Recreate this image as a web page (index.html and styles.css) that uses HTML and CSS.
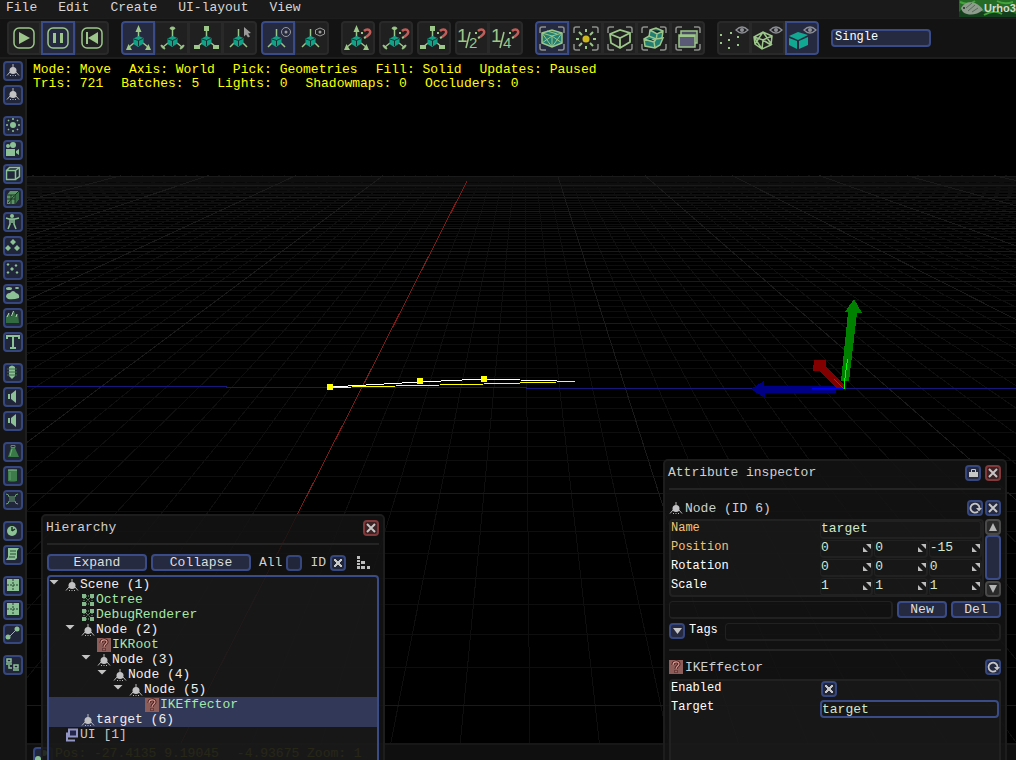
FILE: index.html
```html
<!DOCTYPE html>
<html lang="en">
<head>
<meta charset="utf-8">
<title>Urho3D Editor</title>
<link rel="stylesheet" href="styles.css">
</head>
<body>
<svg class="defs" aria-hidden="true">
  <defs>
    <symbol id="cube-core" viewBox="0 0 34 34">
      <path d="M12.500 17.500 17.500 15 22.500 17v5.500L17 26l-4.500-3z" fill="#0fa287"/>
      <path d="M13 18l4.500 1.500L22 17.500M17.500 19.500V25" stroke="#14312f" fill="none"/>
    </symbol>
    <symbol id="axes-move" viewBox="0 0 34 34">
      <path d="M17.500 8v8M13 22l-5 4M22 22l5 4" stroke="#9cc68a" stroke-width="1.500" fill="none"/>
      <path d="M17.500 4l3 7h-6zM5 29l2.500-6L11 29zM30 29l-2.500-6L24 29z" fill="#9cc68a"/>
      <use href="#cube-core"/>
    </symbol>
    <symbol id="axes-rotate" viewBox="0 0 34 34">
      <path d="M17.500 8v8M13 22l-5 4M22 22l5 4" stroke="#9cc68a" stroke-width="1.500" fill="none"/>
      <path d="M15 7.500c0-2 5-2 5 0l-1.500 1h-2zM6 24c0 2 2 4 4 4l-1-2-1-1zM29 24c0 2-2 4-4 4l1-2 1-1z" fill="#9cc68a" stroke="#9cc68a"/>
      <use href="#cube-core"/>
    </symbol>
    <symbol id="axes-scale" viewBox="0 0 34 34">
      <path d="M17.500 8v8M13 22l-5 4M22 22l5 4" stroke="#9cc68a" stroke-width="1.500" fill="none"/>
      <path d="M15 5h5v5h-5zM5 24h6v4H5zM24 24h6v4h-6z" fill="#9cc68a"/>
      <use href="#cube-core"/>
    </symbol>
    <symbol id="axes-plain" viewBox="0 0 34 34">
      <path d="M15.500 8v8M11 22l-4 4M20 22l4 4" stroke="#9cc68a" stroke-width="1.500" fill="none"/>
      <use href="#cube-core" x="-2"/>
    </symbol>
    <symbol id="snap" viewBox="0 0 34 34">
      <path d="M23 10c2-2 5-2 6 0s-1 4-4 6" fill="none" stroke="#c05d58" stroke-width="2.500"/>
      <path d="M20 12h2M23 17l2-1" stroke="#9cc68a" stroke-width="2"/>
    </symbol>
    <symbol id="corners" viewBox="0 0 34 34">
      <path d="M5 12V8q0-2 2-2h4M23 6h4q2 0 2 2v4M29 23v4q0 2-2 2h-4M11 29H7q-2 0-2-2v-4" fill="none" stroke="#8c8f8c" stroke-width="1.500"/>
    </symbol>
    <symbol id="eye" viewBox="0 0 34 34">
      <path d="M19 9q6-6 12 0-6 6-12 0z" fill="none" stroke="#8d8f95" stroke-width="1.300"/><circle cx="25" cy="9" r="2" fill="#8d8f95"/>
    </symbol>
    <symbol id="node" viewBox="0 0 14 14">
      <path d="M7 1v4M4 9l-3 3.500M10 9l3 3.500M4 12.500h1M6.500 12.500h1M9 12.500h1" stroke="#b9b9b9" fill="none"/>
      <circle cx="7" cy="7.500" r="3.500" fill="#c2c2c4"/>
    </symbol>
    <symbol id="blocks" viewBox="0 0 14 14">
      <path d="M1 1h4v4H1zM9 1h4v4H9zM1 9h4v4H1zM9 9h4v4H9z" fill="#83b98b"/><path d="M5 3h4M3 5v4M11 5v4M5 11h4M5 5l4 4M9 5l-4 4" stroke="#83b98b" stroke-dasharray="1 1"/>
    </symbol>
    <symbol id="unknown" viewBox="0 0 14 14">
      <path d="M0 0h14v14H0z" fill="#8c5d59"/><path d="M4 5c0-4 6-4 6-1 0 2-3 2-3 5M7 10v3" stroke="#471b1b" stroke-width="3" fill="none"/><path d="M4 5c0-4 6-4 6-1 0 2-3 2-3 5M7 10.500v2" stroke="#d99c93" stroke-width="1.200" fill="none"/>
    </symbol>
    <symbol id="uiroot" viewBox="0 0 14 14">
      <path d="M4 1.500h8v7H4z" fill="#24254b" stroke="#9294c4" stroke-width="2"/><path d="M2 4.500v8h8" fill="none" stroke="#9294c4" stroke-width="2"/>
    </symbol>
    <symbol id="cross" viewBox="0 0 16 16"><path d="M4 4l8 8M12 4l-8 8" stroke="#c7c7c7" stroke-width="2"/></symbol>
    <symbol id="reload" viewBox="0 0 16 16"><path d="M11 11.500a4.500 4.500 0 1 1 1.500-3.500" fill="none" stroke="#c7c7c7" stroke-width="1.800"/><path d="M9 8h6l-3 3.500z" fill="#c7c7c7"/></symbol>
    <symbol id="panel" viewBox="0 0 20 20"><path d="M4 3h12v12H4z" fill="#8cc195"/><path d="M10 3v12M4 9h12" stroke="#22432f" stroke-dasharray="2 1"/></symbol>
    <symbol id="speaker" viewBox="0 0 20 20"><path d="M5 7h2v5H5zM8 7l5-4v13l-5-4z" fill="#8cc195"/></symbol>
    <symbol id="resize" viewBox="0 0 10 10"><path d="M4 1h5v5zM1 4v5h5z" fill="#bdbdbd"/></symbol>
  </defs>
</svg>

<header class="menubar">
  <nav class="menus">
    <button class="menu">File</button><button class="menu">Edit</button><button class="menu">Create</button><button class="menu">UI-layout</button><button class="menu">View</button>
  </nav>
  <svg class="logo" viewBox="0 0 57 17" role="img" aria-label="Urho3D">
    <path d="M0 0h57v17H0z" fill="#246b25"/>
    <path d="M0 12q8-9 16-4t12 4 14-4l15 6v3H0z" fill="#143f1c"/>
    <path d="M1 2q9 4 15-1M25 15q10-6 18-1M38 1q7 4 16 1" stroke="#44a33a" stroke-width="2" fill="none"/>
    <path d="M2 8q5-8 14-5 6 3 8 7-8 6-16 4-5-1-6-6z" fill="#8e9c8d"/>
    <path d="M7 8l6-5M9 11l7-6M13 12l6-4" stroke="#566b5c"/><circle cx="5" cy="8" r="1" fill="#172a1c"/>
    <text class="logo-text" x="25" y="12">Urho3</text>
  </svg>
</header>

<div class="toolbar" role="toolbar">
  <div class="tools">
    <button class="tool" aria-label="Play"><svg viewBox="0 0 34 34"><rect x="7" y="7" width="20" height="20" rx="5" fill="none" stroke="#9cc68a" stroke-width="1.500"/><path d="M12 11v12l11-6z" fill="#9cc68a"/></svg></button>
    <button class="tool on" aria-label="Pause"><svg viewBox="0 0 34 34"><rect x="7" y="7" width="20" height="20" rx="5" fill="none" stroke="#9cc68a" stroke-width="1.500"/><path d="M12 12h3v10h-3zM19 12h3v10h-3z" fill="#9cc68a"/></svg></button>
    <button class="tool" aria-label="Rewind"><svg viewBox="0 0 34 34"><rect x="7" y="7" width="20" height="20" rx="5" fill="none" stroke="#9cc68a" stroke-width="1.500"/><path d="M11 11h2v12h-2zM23 11v12l-10-6z" fill="#9cc68a"/></svg></button>
  </div>
  <div class="tools">
    <button class="tool on" aria-label="Move"><svg><use href="#axes-move"/></svg></button>
    <button class="tool" aria-label="Rotate"><svg><use href="#axes-rotate"/></svg></button>
    <button class="tool" aria-label="Scale"><svg><use href="#axes-scale"/></svg></button>
    <button class="tool" aria-label="Select"><svg viewBox="0 0 34 34"><use href="#axes-plain"/><path d="M21 6l7 6-3 .5 2 3-2 1-2-3-2 2z" fill="#9b9b9b"/></svg></button>
  </div>
  <div class="tools tight">
    <button class="tool on" aria-label="World axes"><svg viewBox="0 0 34 34"><use href="#axes-plain"/><circle cx="25" cy="11" r="4.500" fill="none" stroke="#9b9b9b"/><circle cx="25" cy="11" r="1.500" fill="#9b9b9b"/></svg></button>
    <button class="tool" aria-label="Local axes"><svg viewBox="0 0 34 34"><use href="#axes-plain"/><path d="M25 7l4.500 2v4L25 15l-4.500-2V9z" fill="none" stroke="#9b9b9b"/><circle cx="25" cy="11" r="1.500" fill="#9b9b9b"/></svg></button>
  </div>
  <div class="tools"><button class="tool" aria-label="Snap move"><svg viewBox="0 0 34 34"><use href="#axes-move" x="-2"/><use href="#snap"/></svg></button></div>
  <div class="tools tight"><button class="tool" aria-label="Snap rotate"><svg viewBox="0 0 34 34"><use href="#axes-rotate" x="-2"/><use href="#snap"/></svg></button></div>
  <div class="tools tight"><button class="tool" aria-label="Snap scale"><svg viewBox="0 0 34 34"><use href="#axes-scale" x="-2"/><use href="#snap"/></svg></button></div>
  <div class="tools tight">
    <button class="tool" aria-label="Half snap"><svg viewBox="0 0 34 34"><text class="frac big" x="2" y="21">1</text><path d="M11 27l4-16" stroke="#9cc68a" stroke-width="1.500"/><text class="frac" x="14" y="27">2</text><use href="#snap"/></svg></button>
    <button class="tool" aria-label="Quarter snap"><svg viewBox="0 0 34 34"><text class="frac big" x="2" y="21">1</text><path d="M11 27l4-16" stroke="#9cc68a" stroke-width="1.500"/><text class="frac" x="14" y="27">4</text><use href="#snap"/></svg></button>
  </div>
  <div class="tools">
    <button class="tool on" aria-label="Pick geometries"><svg viewBox="0 0 34 34"><use href="#corners"/><path d="M7 12l10-3 10 3v10l-10 4-10-4z" fill="#227f72" stroke="#9cc68a" stroke-width="1.500"/><path d="M7 12l10 3 10-3M17 15v11M7 12l10 14M27 12L17 26M12 10l10 3M7 22l10-7 10 7" stroke="#9cc68a" fill="none"/></svg></button>
    <button class="tool" aria-label="Pick lights"><svg viewBox="0 0 34 34"><use href="#corners"/><circle cx="17" cy="18" r="3.500" fill="#cdb91e"/><path d="M17 8v3M17 25v3M7 18h3M24 18h3M10 11l3 3M21 22l3 3M24 11l-3 3M13 22l-3 3" stroke="#9cc68a" stroke-width="2"/></svg></button>
    <button class="tool" aria-label="Pick zones"><svg viewBox="0 0 34 34"><use href="#corners"/><path d="M7 13l10-4 10 3v9l-10 6-9-5zM7 13l10 4 10-5M17 17v10" fill="none" stroke="#9cc68a" stroke-width="1.800"/></svg></button>
    <button class="tool" aria-label="Pick bodies"><svg viewBox="0 0 34 34"><use href="#corners"/><path d="M13 9l6-2 7 3-1 7-6 3-7-4zM13 9l7 4 6-3M20 13l-1 7" fill="#227f72" stroke="#9cc68a" stroke-width="1.500"/><path d="M7 18l5-3 7 3 7-1-3 7-5 3-10-2zM7 18l10 3 2-3M17 21l1 6" fill="#227f72" stroke="#9cc68a" stroke-width="1.500"/></svg></button>
    <button class="tool" aria-label="Pick UI"><svg viewBox="0 0 34 34"><use href="#corners"/><path d="M10 10h16v12H10z" fill="#4b4b62" stroke="#9cc68a" stroke-width="1.500"/><path d="M8 14h16v12H8z" fill="#5b5a76" stroke="#9cc68a" stroke-width="1.500"/><path d="M8 15h16" stroke="#9cc68a" stroke-width="2"/></svg></button>
  </div>
  <div class="tools">
    <button class="tool" aria-label="Point fill"><svg viewBox="0 0 34 34"><use href="#eye"/><path d="M3 13h2v2H3zM13 11h2v2h-2zM3 21h2v2H3zM11 18h2v2h-2zM20 15h2v2h-2zM20 23h2v2h-2zM11 26h2v2h-2z" fill="#9cc68a"/></svg></button>
    <button class="tool" aria-label="Wire fill"><svg viewBox="0 0 34 34"><use href="#eye"/><path d="M3 16l9-5 9 4-1 9-9 4-7-5zM3 16l9 3 9-4M12 19l-1 9M12 11l9 13M3 16l8 12M12 19l8 5M12 11L4 23" fill="none" stroke="#9cc68a" stroke-width="1.500"/></svg></button>
    <button class="tool on" aria-label="Solid fill"><svg viewBox="0 0 34 34"><use href="#eye"/><path d="M4 15l9-4 10 3-10 5zM4 17l8 3v8l-8-4zM14 20l9-4v8l-9 4z" fill="#10a890"/></svg></button>
  </div>
  <select class="view-select" aria-label="Viewport layout"><option>Single</option></select>
</div>

<div class="work">
  <aside class="sidebar">
    <div class="side-group">
      <button class="side" aria-label="Replicated node"><svg viewBox="-3 -2 20 20"><use href="#node" width="14" height="14"/></svg></button>
      <button class="side" aria-label="Local node"><svg viewBox="-3 -2 20 20"><use href="#node" width="14" height="14"/></svg></button>
    </div>
    <div class="side-group">
      <button class="side" aria-label="Light"><svg viewBox="0 0 20 20"><circle cx="10" cy="9" r="3" fill="#8cc195"/><path d="M10 2v2M10 14v2M3 9h2M15 9h2M5 4l1 1M15 4l-1 1M5 14l1-1M15 14l-1-1" stroke="#8cc195" stroke-width="1.500"/></svg></button>
      <button class="side" aria-label="Camera"><svg viewBox="0 0 20 20"><path d="M3 9h9v7H3zM13 11l3-2v6l-3-2z" fill="#8cc195"/><circle cx="5" cy="6" r="2" fill="#8cc195"/><circle cx="10" cy="5" r="3" fill="#8cc195"/></svg></button>
      <button class="side" aria-label="Zone"><svg viewBox="0 0 20 20"><path d="M3.500 6.500h9v9h-9zM3.500 6.500l3-3h10v9l-4 3M12.500 6.500l4-3" fill="none" stroke="#8cc195" stroke-width="1.500"/></svg></button>
      <button class="side" aria-label="Static model"><svg viewBox="0 0 20 20"><path d="M4 7l3-4h9v8l-4 5H4z" fill="#5a9366"/><path d="M12 7l4-4v8l-4 5z" fill="#397047"/><path d="M4 7h8v9M12 7l4-4M8 7v9M4 11h8M5 15l6-7" stroke="#193321" fill="none"/></svg></button>
      <button class="side" aria-label="Animated model"><svg viewBox="0 0 20 20"><circle cx="9" cy="4" r="2" fill="#8cc195"/><path d="M3 6l3 1h6l4-1M9 7v4M7 7v5l-2 5M11 7v5l2 5" stroke="#8cc195" stroke-width="1.500" fill="none"/></svg></button>
      <button class="side" aria-label="Billboards"><svg viewBox="0 0 20 20"><path d="M10 3l3 3-3 3-3-3zM5 9l3 3-3 3-3-3zM14 9l3 3-3 3-3-3z" fill="#8cc195"/></svg></button>
      <button class="side" aria-label="Particles"><svg viewBox="0 0 20 20"><path d="M5 3l1.500 1.500L5 6 3.500 4.500zM13 4l1.500 1.500L13 7l-1.500-1.500zM9 7l2 2-2 2-2-2zM5 11l1.500 1.500L5 14l-1.500-1.500zM14 11l1.500 1.500L14 14l-1.500-1.500z" fill="#8cc195"/></svg></button>
      <button class="side" aria-label="Skybox"><svg viewBox="0 0 20 20"><ellipse cx="6" cy="4.500" rx="3" ry="1.500" fill="#8cc195"/><ellipse cx="14" cy="4" rx="2" ry="1" fill="#8cc195"/><path d="M3 13q0-4 4-4 3-4 6 0 4 1 3 5-6 2-11 1z" fill="#8cc195"/></svg></button>
      <button class="side" aria-label="Terrain"><svg viewBox="0 0 20 20"><path d="M3 15V9l3-4 2 4 3-6 2 5 2-2 1 9z" fill="#326b40"/><path d="M6 5L4 9M10.500 3l-2 5M14 6l-1 3" stroke="#b7ddb9" fill="none"/></svg></button>
      <button class="side" aria-label="Text 3D"><svg viewBox="0 0 20 20"><path d="M4 7V4h12v3M10 4v12M7 16h6" fill="none" stroke="#8cc195" stroke-width="2"/></svg></button>
    </div>
    <div class="side-group">
      <button class="side" aria-label="Sound listener"><svg viewBox="0 0 20 20"><path d="M6 4q3-3 6 0v9l-3 3-3-3z" fill="#8cc195"/><path d="M4 6h10M4 9h10M4 12h10" stroke="#3f6a4a"/></svg></button>
      <button class="side" aria-label="Sound source"><svg><use href="#speaker"/></svg></button>
      <button class="side" aria-label="Sound source 3D"><svg><use href="#speaker"/></svg></button>
    </div>
    <div class="side-group">
      <button class="side" aria-label="Rigid body"><svg viewBox="0 0 20 20"><path d="M8 6L5 15h11L12 6z" fill="#397947"/><path d="M8 3.500h4v2H8z" fill="none" stroke="#5f8f68"/><path d="M9 7l-2 7" stroke="#6fae7b"/></svg></button>
      <button class="side" aria-label="Collision shape"><svg viewBox="0 0 20 20"><path d="M5 4q4-1 9 0v11q-5 1-9 0z" fill="#3f7c4c"/><path d="M5 4h9" stroke="#8cc195"/><path d="M7 6v8" stroke="#65a171"/></svg></button>
      <button class="side" aria-label="Constraint"><svg viewBox="0 0 20 20"><path d="M3 4q3 0 3 3h6q0-3 3-3M3 14q3 0 3-3h6q0 3 3 3M6 9h6" fill="none" stroke="#69a473"/></svg></button>
    </div>
    <div class="side-group">
      <button class="side" aria-label="Animation"><svg viewBox="0 0 20 20"><circle cx="9" cy="10" r="5" fill="#8cc195"/><path d="M9 10V6M9 10l3-2M7 3h4" stroke="#193321" stroke-width="1.500"/></svg></button>
      <button class="side" aria-label="Script"><svg viewBox="0 0 20 20"><path d="M5 3h11l-2 3v7l-2 2H3l2-3z" fill="#8cc195"/><path d="M7 6h6M7 9h6M6 12h6" stroke="#274b32"/></svg></button>
    </div>
    <div class="side-group">
      <button class="side" aria-label="Navigable"><svg><use href="#panel"/></svg></button>
      <button class="side" aria-label="Navigation mesh"><svg><use href="#panel"/></svg></button>
      <button class="side" aria-label="Connection"><svg viewBox="0 0 20 20"><path d="M5 14l9-9" stroke="#8cc195"/><circle cx="5" cy="13" r="2.500" fill="#8cc195"/><circle cx="14" cy="5" r="2.500" fill="#8cc195"/></svg></button>
    </div>
    <div class="side-group">
      <button class="side" aria-label="Network"><svg viewBox="0 0 20 20"><path d="M4 4h4v3H4zM11 10h4v3h-4zM3 9h6M10 15h6M6 10v3h3" fill="none" stroke="#8cc195" stroke-width="1.500"/></svg></button>
    </div>
  </aside>

  <main class="viewport">
    <svg class="scene" viewBox="27 59 989 701" preserveAspectRatio="xMinYMin slice" aria-hidden="true">
      <rect x="27" y="177" width="989" height="14" fill="#080808"/>
      <path id="minor" class="grid-minor"/>
      <path id="major" class="grid-major"/>
      <path d="M467 181L180 745" stroke="#7d1a1a"/>
      <path d="M27 386.500H226V387.500H526V388.500H840" stroke="#17177c" fill="none"/>
      <path d="M840 388.500H1016" stroke="#17177c"/>
      <path d="M330 387L420 382 484 379 575 381.500" fill="none" stroke="#fff"/>
      <path d="M330 387.500L484 384 575 381.500" fill="none" stroke="#ff0"/>
      <g fill="#ff0"><circle cx="330" cy="387" r="3.500"/><circle cx="420" cy="381" r="3.500"/><circle cx="484" cy="379" r="3.500"/></g>
      <path d="M751 389l13-8v5h72v7h-71v5z" fill="#000084"/>
      <path d="M814 360h12v6l18 19v4h-7l-18-18h-6z" fill="#820000"/>
      <path d="M841 381l7-69h-3l9-13 8 14h-5l-8 68z" fill="#008200"/>
      <path d="M812 388.500l32 .5" stroke="#0000f0"/><path d="M834 379l10 10" stroke="#f00"/><path d="M844.500 389v-7l3-23" stroke="#0f0" fill="none"/>
    </svg>

    <div class="hud">
      <div class="hud-line"><span>Mode: Move</span><span>Axis: World</span><span>Pick: Geometries</span><span>Fill: Solid</span><span>Updates: Paused</span></div>
      <div class="hud-line"><span>Tris: 721</span><span>Batches: 5</span><span>Lights: 0</span><span>Shadowmaps: 0</span><span>Occluders: 0</span></div>
    </div>

    <footer class="status">
      <span class="side"><svg viewBox="0 0 20 20"><circle cx="5" cy="12" r="3" fill="#8cc195"/><circle cx="11" cy="6" r="3" fill="#8cc195"/></svg></span>
      <span class="pos">Pos: -27.4135 9.19045</span><span>-4.93675 Zoom: 1</span>
    </footer>

    <section class="window hierarchy" aria-label="Hierarchy">
      <div class="titlebar"><h2 class="title">Hierarchy</h2><button class="mini close" aria-label="Close hierarchy"><svg><use href="#cross"/></svg></button></div>
      <div class="rule"></div>
      <div class="controls">
        <button class="btn wide">Expand</button><button class="btn wide">Collapse</button>
        <label class="check-label" for="all">All</label><input class="check" type="checkbox" id="all">
        <label class="check-label" for="showid">ID</label><input class="check" type="checkbox" id="showid" checked>
        <svg class="tree-icon" viewBox="0 0 14 14"><path d="M1 0h3v3H1zM1 4h3v2H1zM1 7h3v2H1zM5 5h4v3H5zM1 10h3v3H1zM5 10h4v3H5zM11 10h3v3h-3z" fill="#bdbdbd"/></svg>
      </div>
      <ul class="tree">
        <li class="row d0"><i class="arrow"></i><svg class="ico"><use href="#node"/></svg>Scene (1)</li>
        <li class="row d1 comp"><i class="arrow none"></i><svg class="ico"><use href="#blocks"/></svg>Octree</li>
        <li class="row d1 comp"><i class="arrow none"></i><svg class="ico"><use href="#blocks"/></svg>DebugRenderer</li>
        <li class="row d1"><i class="arrow"></i><svg class="ico"><use href="#node"/></svg>Node (2)</li>
        <li class="row d2 comp"><i class="arrow none"></i><svg class="ico"><use href="#unknown"/></svg>IKRoot</li>
        <li class="row d2"><i class="arrow"></i><svg class="ico"><use href="#node"/></svg>Node (3)</li>
        <li class="row d3"><i class="arrow"></i><svg class="ico"><use href="#node"/></svg>Node (4)</li>
        <li class="row d4"><i class="arrow"></i><svg class="ico"><use href="#node"/></svg>Node (5)</li>
        <li class="row d5 comp sel"><i class="arrow none"></i><svg class="ico"><use href="#unknown"/></svg>IKEffector</li>
        <li class="row d1 sel"><i class="arrow none"></i><svg class="ico"><use href="#node"/></svg>target (6)</li>
        <li class="row d0 dim"><i class="arrow none"></i><svg class="ico"><use href="#uiroot"/></svg>UI [1]</li>
      </ul>
    </section>

    <section class="window inspector" aria-label="Attribute inspector">
      <div class="titlebar"><h2 class="title">Attribute inspector</h2>
        <button class="mini" aria-label="Lock"><svg viewBox="0 0 16 16"><path d="M4 7h9v5H4z" fill="#c7c7c7"/><path d="M6.500 7V4.500h4V7" stroke="#c7c7c7" fill="none"/></svg></button>
        <button class="mini close" aria-label="Close inspector"><svg><use href="#cross"/></svg></button></div>
      <div class="rule"></div>
      <div class="section-head node-head"><svg class="ico"><use href="#node"/></svg><h3 class="title">Node (ID 6)</h3>
        <button class="mini" aria-label="Reset node"><svg><use href="#reload"/></svg></button><button class="mini" aria-label="Remove node"><svg><use href="#cross"/></svg></button></div>
      <div class="attr-area">
        <div class="attrs">
          <div class="attr changed"><label for="name">Name</label><div class="fields"><input class="field" id="name" value="target"></div></div>
          <div class="attr changed"><label for="px">Position</label><div class="fields">
            <span class="num"><input class="field" id="px" value="0"><svg><use href="#resize"/></svg></span><span class="num"><input class="field" aria-label="Position Y" value="0"><svg><use href="#resize"/></svg></span><span class="num"><input class="field" aria-label="Position Z" value="-15"><svg><use href="#resize"/></svg></span></div></div>
          <div class="attr"><label for="rx">Rotation</label><div class="fields">
            <span class="num"><input class="field" id="rx" value="0"><svg><use href="#resize"/></svg></span><span class="num"><input class="field" aria-label="Rotation Y" value="0"><svg><use href="#resize"/></svg></span><span class="num"><input class="field" aria-label="Rotation Z" value="0"><svg><use href="#resize"/></svg></span></div></div>
          <div class="attr"><label for="sx">Scale</label><div class="fields">
            <span class="num"><input class="field" id="sx" value="1"><svg><use href="#resize"/></svg></span><span class="num"><input class="field" aria-label="Scale Y" value="1"><svg><use href="#resize"/></svg></span><span class="num"><input class="field" aria-label="Scale Z" value="1"><svg><use href="#resize"/></svg></span></div></div>
        </div>
        <div class="scroll">
          <button class="mini gray" aria-label="Scroll up"><svg viewBox="0 0 16 16"><path d="M8 4l4 8H4z" fill="#b5b5b5"/></svg></button>
          <div class="thumb"></div>
          <button class="mini gray" aria-label="Scroll down"><svg viewBox="0 0 16 16"><path d="M8 12l4-8H4z" fill="#b5b5b5"/></svg></button>
        </div>
      </div>
      <div class="var-row"><input class="field grow" aria-label="Variable name"><button class="btn short">New</button><button class="btn short">Del</button></div>
      <div class="tag-row"><button class="mini" aria-label="Expand tags"><svg viewBox="0 0 16 16"><path d="M4 5h9l-4.500 6z" fill="#c7c7c7"/></svg></button><label for="tags">Tags</label><input class="field grow" id="tags"></div>
      <div class="rule"></div>
      <div class="section-head comp-head"><svg class="ico"><use href="#unknown"/></svg><h3 class="title">IKEffector</h3><button class="mini" aria-label="Reset component"><svg><use href="#reload"/></svg></button></div>
      <div class="attrs comp-attrs">
        <div class="attr"><label for="enabled">Enabled</label><div class="fields"><input class="check" type="checkbox" id="enabled" checked></div></div>
        <div class="attr"><label for="target">Target</label><div class="fields"><input class="field active" id="target" value="target"></div></div>
      </div>
    </section>
  </main>
</div>
<script src="scene.js"></script>
</body>
</html>
```
FILE: styles.css
```css
* { box-sizing: border-box; }
html, body { height: 100%; }
body {
  margin: 0;
  display: flex;
  flex-direction: column;
  overflow: hidden;
  background: #000;
  color: #dcdcdc;
  font: 13px/15px "Liberation Mono", "DejaVu Sans Mono", monospace;
}
button, input, select { font: inherit; color: inherit; margin: 0; padding: 0; border: 0; outline: 0; background: none; }
svg { display: block; }
.defs { position: absolute; width: 0; height: 0; }

.menubar { display: flex; justify-content: space-between; height: 18px; background: #1a1a1a; color: #d6d6d6; flex: none; }
.menus { display: flex; gap: 21px; padding-left: 6px; }
.menu { height: 15px; }
.logo { width: 57px; height: 17px; overflow: hidden; }
.logo-text { font: bold 11px "Liberation Sans", sans-serif; fill: #d4dbd1; }

.toolbar { display: flex; align-items: flex-start; height: 41px; padding: 2px 7px; background: #131313; border-top: 1px solid #1d1d1d; border-bottom: 2px solid #1d1d1d; flex: none; }
.tools { display: flex; margin-right: 12px; border-radius: 4px; overflow: hidden; background: #202020; flex: none; }
.tools:has(+ .tight) { margin-right: 4px; }
.tool { width: 34px; height: 34px; border: 2px solid #292929; }
.tool + .tool { border-left-width: 1px; }
.tool:first-child { border-radius: 4px 0 0 4px; }
.tool:last-child { border-radius: 0 4px 4px 0; }
.tool:only-child { border-radius: 4px; }
.tool.on { border: 2px solid #3a4c88; background: #262a40; }
.tool svg { width: 34px; height: 34px; margin: -2px; }
.tool + .tool:not(.on) svg { margin-left: -1px; }
.frac { font: 15px "Liberation Sans", sans-serif; fill: #9cc68a; }
.frac.big { font-size: 19px; }
.view-select { width: 100px; height: 18px; margin-top: 8px; padding-left: 2px; padding-bottom: 2px; appearance: none; border: 2px solid #3a4c88; border-radius: 4px; background: #262a40; color: #fff; font-size: 12px; line-height: 12px; }

.work { flex: 1; display: flex; min-height: 0; }
.sidebar { width: 27px; padding: 2px 3px; display: flex; flex-direction: column; gap: 11px; background: #141414; border-right: 2px solid #1d1d1d; flex: none; }
.side-group { display: flex; flex-direction: column; gap: 4px; }
.side { width: 20px; height: 20px; border: 2px solid #35477e; border-radius: 4px; background: #22263a; flex: none; }
.side svg { width: 20px; height: 20px; margin: -2px; }

.viewport { position: relative; flex: 1; min-width: 0; overflow: hidden; background: #000; }
.scene { position: absolute; inset: 0; width: 100%; height: 100%; shape-rendering: crispEdges; }
.grid-minor { fill: none; stroke: #0e0e0e; }
.grid-major { fill: none; stroke: #1a1a1a; }
.hud { position: relative; padding: 4px 6px; color: #ff0; line-height: 14px; }
.hud-line { display: flex; gap: 18px; white-space: nowrap; }
.status { position: absolute; left: 0; right: 0; bottom: 0; height: 17px; padding: 2px 6px; display: flex; gap: 18px; background: #0f0f0f; border-top: 2px solid #171717; color: #ff0; line-height: 13px; white-space: nowrap; }
.status .pos { margin-left: -16px; }

.window { position: absolute; width: 344px; bottom: -16px; display: flex; flex-direction: column; padding: 0 4px; background: rgba(20, 20, 20, 0.86); border: 2px solid #1d1d1d; border-radius: 5px; color: #cfcfcf; }
.hierarchy { left: 14px; top: 455px; }
.inspector { right: 9px; top: 400px; }
.titlebar { display: flex; align-items: center; gap: 4px; height: 23px; }
.title { flex: 1; margin: 0; font: inherit; font-size: 13px; }
.titlebar .title { margin-left: -1px; }
.rule { height: 2px; background: #242424; margin: 4px 0 3px; flex: none; }
.mini { width: 16px; height: 16px; border: 2px solid #35477e; border-radius: 4px; background: #262a40; flex: none; }
.mini svg { width: 16px; height: 16px; margin: -2px; }
.mini.close { border-color: #82393b; background: #3d2225; }
.mini.gray { border-color: #494949; background: #292929; }
.btn { height: 17px; border: 2px solid #3a4c88; border-radius: 4px; background: #262a40; color: #dedede; line-height: 13px; }
.btn.wide { width: 100px; }
.btn.short { width: 50px; }
.controls { display: flex; align-items: center; gap: 4px; margin-top: 6px; height: 17px; flex: none; }
.check-label { margin-left: 4px; }
.check { appearance: none; width: 16px; height: 16px; border: 2px solid #35477e; border-radius: 4px; background-color: #22263a; flex: none; }
.check:checked { background-image: linear-gradient(45deg, transparent 41%, #c7c7c7 42% 58%, transparent 59%), linear-gradient(-45deg, transparent 41%, #c7c7c7 42% 58%, transparent 59%); background-size: 8px 8px; background-position: center; background-repeat: no-repeat; }
.tree-icon { width: 14px; height: 14px; margin-left: 6px; }
.tree { flex: 1; list-style: none; margin: 4px 0 0; padding: 0; border: 2px solid #3a4c88; border-radius: 4px 4px 0 0; background: rgba(29, 29, 29, 0.6); }
.row { display: flex; align-items: center; height: 15px; color: #efefef; }
.row.comp { color: #a5e8a8; }
.row.dim { color: #c8c8c8; }
.row.sel { background: #323858; }
.d1 { padding-left: 16px; }
.d2 { padding-left: 32px; }
.d3 { padding-left: 48px; }
.d4 { padding-left: 64px; }
.d5 { padding-left: 80px; }
.arrow { width: 10px; height: 5px; margin-right: 6px; margin-bottom: 5px; background: #c3c3c3; clip-path: polygon(0 0, 100% 0, 50% 100%); }
.arrow.none { visibility: hidden; }
.ico { width: 14px; height: 14px; margin-right: 1px; flex: none; }

.section-head { display: flex; align-items: center; gap: 2px; height: 22px; }
.section-head .ico { margin: 0; }
.node-head { margin-top: 4px; }
.comp-head { margin-top: 2px; }
.attr-area { display: flex; gap: 1px; }
.attrs { flex: 1; border: 2px solid #212121; border-radius: 4px; background: rgba(29, 29, 29, 0.6); }
.attr { display: grid; grid-template-columns: 149px 1fr; height: 19px; color: #fff; font-size: 12px; line-height: 14px; }
.attr-area .attr:last-child { height: 17px; }
.attr.changed { color: #f5c374; }
.fields { display: flex; gap: 1px; min-width: 0; color: #cfe8cf; font-size: 13px; }
.field { flex: 1; width: 100%; min-width: 0; height: 18px; padding-bottom: 2px; border: 2px solid #212121; border-top-width: 1px; border-left-width: 1px; border-radius: 4px; line-height: 14px; }
.num { flex: 1; min-width: 0; display: grid; }
.num > * { grid-area: 1 / 1; }
.num svg { width: 10px; height: 10px; justify-self: end; align-self: start; margin: 3px 1px 0; }
.scroll { display: flex; flex-direction: column; justify-content: space-between; width: 16px; }
.thumb { flex: 1; margin: 0 0 1px; border: 2px solid #3a4c88; border-radius: 4px; background: #262a40; }
.var-row { display: flex; gap: 4px; margin-top: 4px; }
.tag-row { display: flex; gap: 4px; margin: 4px 0; color: #fff; font-size: 12px; line-height: 14px; }
.tag-row .field { margin-left: 3px; }
.comp-attrs { margin-top: 1px; }
.comp-attrs .attr { grid-template-columns: 150px 1fr; }
.field.active { border: 2px solid #3a4c88; padding: 0; margin-left: -1px; }
```
FILE: scene.js
```js
// Builds the ground grid in perspective: both line families meet at the horizon.
const VX = 524, VY = 70, STEPS = 8;
const rowY = n => VY + 1 / (0.003155 + 0.00079 * n);
const minor = [], major = [];

for (let i = -3 * STEPS; i <= 8 * STEPS; i++) {
  const y = Math.round(rowY(i / STEPS)) + 0.5;
  if (i === 0 || y < VY || y > 900) continue;
  (i % STEPS ? minor : major).push(`M27 ${y}H1016`);
}

const farY = rowY(8);
for (let i = -8 * STEPS; i <= 8 * STEPS; i++) {
  const slope = (-161 + 262 * i / STEPS) / 317;
  const x1 = VX + slope * (farY - VY), x2 = VX + slope * (900 - VY);
  if (i !== 0) (i % STEPS ? minor : major).push(`M${x1} ${farY}L${x2} 900`);
}

document.getElementById("minor").setAttribute("d", minor.join(""));
document.getElementById("major").setAttribute("d", major.join(""));
```
